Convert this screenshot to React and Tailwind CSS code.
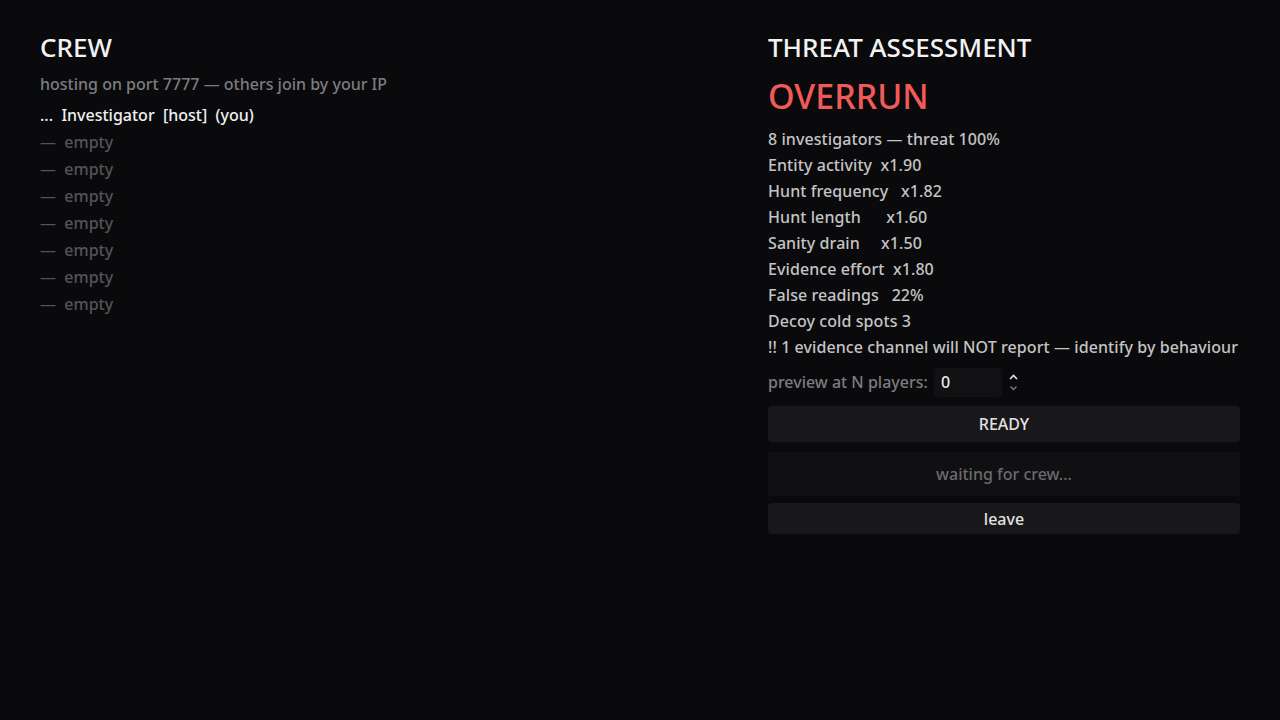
import React from "react";

const stats = [
  "8 investigators — threat 100%",
  "Entity activity  x1.90",
  "Hunt frequency   x1.82",
  "Hunt length      x1.60",
  "Sanity drain     x1.50",
  "Evidence effort  x1.80",
  "False readings   22%",
  "Decoy cold spots 3",
  "!! 1 evidence channel will NOT report — identify by behaviour",
];

export default function App() {
  return (
    <div
      className="w-[1280px] h-[720px] bg-[#0a0a0c] text-[#e0e0e0] font-medium flex px-[40px] pt-[30px]"
      style={{ fontFamily: '"Noto Sans", "Open Sans", sans-serif' }}
    >
      <div className="flex-1 flex flex-col">
        <div className="text-[26px] leading-[34px] text-[#f2f2f2]">CREW</div>
        <div className="text-[16px] leading-[22px] text-[#7c7c80] mt-[9px]">
          hosting on port 7777 — others join by your IP
        </div>
        <div className="text-[16px] leading-[22px] text-[#f0f0f0] mt-[9px] whitespace-pre">
          {"...  Investigator  [host]  (you)"}
        </div>
        {Array.from({ length: 7 }).map((_, i) => (
          <div key={i} className="text-[16px] leading-[22px] text-[#545458] mt-[5px] whitespace-pre">
            {"—  empty"}
          </div>
        ))}
      </div>
      <div className="w-[472px] flex flex-col">
        <div className="text-[26px] leading-[34px] text-[#f2f2f2]">THREAT ASSESSMENT</div>
        <div className="text-[34px] leading-[44px] text-[#f25a5a] mt-[10px]">OVERRUN</div>
        <div className="flex flex-col mt-[10px]">
          {stats.map((s, i) => (
            <div key={i} className="text-[16px] leading-[22px] text-[#c4c4c4] mb-[4px] whitespace-pre tracking-[0.08px]">
              {s}
            </div>
          ))}
        </div>
        <div className="flex items-center mt-[5px] h-[30px]">
          <span className="text-[16px] text-[#7c7c80] whitespace-pre">preview at N players: </span>
          <div className="ml-[2px] w-[68px] h-[29px] bg-[#111113] rounded-[3px] flex items-center px-[7px] text-[16px] text-[#e8e8e8]">
            0
          </div>
          <div className="ml-[6px] flex flex-col items-center justify-center gap-[3px]">
            <svg width="11" height="8" viewBox="0 0 11 8">
              <path d="M2 6 L5.5 2.5 L9 6" stroke="#e0e0e0" strokeWidth="1.6" fill="none" />
            </svg>
            <svg width="11" height="8" viewBox="0 0 11 8">
              <path d="M2.5 2.5 L5.5 5.5 L8.5 2.5" stroke="#7a7a7a" strokeWidth="1.4" fill="none" />
            </svg>
          </div>
        </div>
        <div className="mt-[9px] h-[36px] bg-[#18181a] rounded-[4px] flex items-center justify-center text-[16px] text-[#e2e2e2]">
          READY
        </div>
        <div className="mt-[10px] h-[44px] bg-[#101012] rounded-[4px] flex items-center justify-center text-[16px] text-[#6a6a6e]">
          waiting for crew...
        </div>
        <div className="mt-[7px] h-[31px] bg-[#18181a] rounded-[4px] flex items-center justify-center text-[16px] text-[#e2e2e2]">
          leave
        </div>
      </div>
    </div>
  );
}
